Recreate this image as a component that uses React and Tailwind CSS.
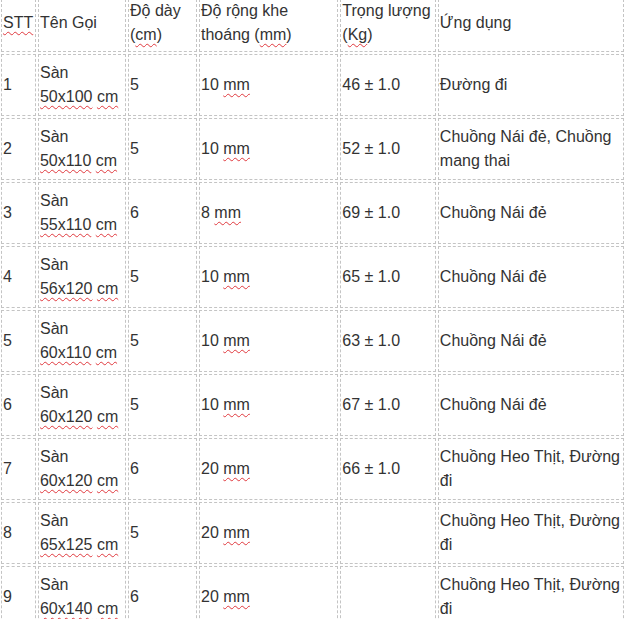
const rows = [
    { stt: "1", size: "50x100", day: "5", khe: "10", kg: "46 ± 1.0", use: "Đường đi" },
    { stt: "2", size: "50x110", day: "5", khe: "10", kg: "52 ± 1.0", use: "Chuồng Nái đẻ, Chuồng mang thai" },
    { stt: "3", size: "55x110", day: "6", khe: "8", kg: "69 ± 1.0", use: "Chuồng Nái đẻ" },
    { stt: "4", size: "56x120", day: "5", khe: "10", kg: "65 ± 1.0", use: "Chuồng Nái đẻ" },
    { stt: "5", size: "60x110", day: "5", khe: "10", kg: "63 ± 1.0", use: "Chuồng Nái đẻ" },
    { stt: "6", size: "60x120", day: "5", khe: "10", kg: "67 ± 1.0", use: "Chuồng Nái đẻ" },
    { stt: "7", size: "60x120", day: "6", khe: "20", kg: "66 ± 1.0", use: "Chuồng Heo Thịt, Đường đi" },
    { stt: "8", size: "65x125", day: "5", khe: "20", kg: "", use: "Chuồng Heo Thịt, Đường đi" },
    { stt: "9", size: "60x140", day: "6", khe: "20", kg: "", use: "Chuồng Heo Thịt, Đường đi" },
];

// spellcheck-style squiggle
function Sq({ children }) {
    return (
        <span className="underline decoration-wavy decoration-[#e0393e] decoration-1 underline-offset-[3px]">
            {children}
        </span>
    );
}

const base = "border border-dashed border-[#c4c4c4] px-px align-middle text-left font-normal";
const cell = base + " py-[6px]";
const head = base + " py-[4px]";

export default function App() {
    return (
        <div className="h-screen overflow-hidden bg-white">
            <table
                className="-mt-[8px] -ml-px table-fixed border-separate border-spacing-[2px] text-[16px] leading-[24px] text-[#333333]"
                style={{ fontFamily: '"Liberation Sans", Arial, sans-serif' }}
            >
                <colgroup>
                    <col className="w-[35px]" />
                    <col className="w-[89px]" />
                    <col className="w-[70px]" />
                    <col className="w-[142px]" />
                    <col className="w-[97px]" />
                    <col className="w-[190px]" />
                </colgroup>
                <tbody>
                    <tr>
                        <td className={head}><Sq>STT</Sq></td>
                        <td className={head}>Tên Gọi</td>
                        <td className={head}>Độ dày (<Sq>cm</Sq>)</td>
                        <td className={head}>Độ rộng khe thoáng (<Sq>mm</Sq>)</td>
                        <td className={head}>Trọng lượng (<Sq>Kg</Sq>)</td>
                        <td className={head}>Ứng dụng</td>
                    </tr>
                    {rows.map((r) => (
                        <tr key={r.stt}>
                            <td className={cell}>{r.stt}</td>
                            <td className={cell}>
                                Sàn
                                <br />
                                <Sq>{r.size}</Sq> <Sq>cm</Sq>
                            </td>
                            <td className={cell}>{r.day}</td>
                            <td className={cell}>
                                {r.khe} <Sq>mm</Sq>
                            </td>
                            <td className={cell}>{r.kg}</td>
                            <td className={cell}>{r.use}</td>
                        </tr>
                    ))}
                </tbody>
            </table>
        </div>
    );
}
